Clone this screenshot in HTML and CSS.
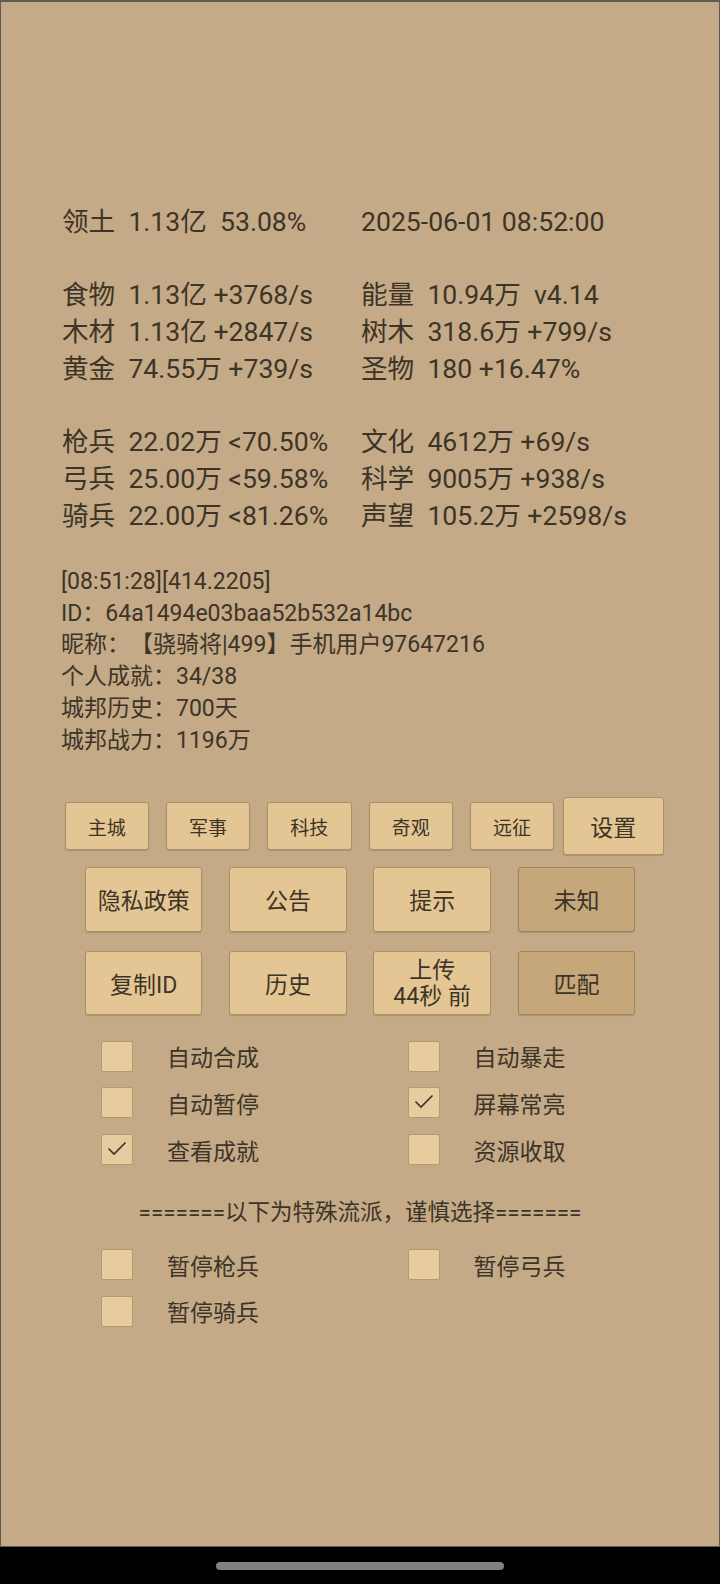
FILE: index.html
```html
<!DOCTYPE html>
<html lang="zh-CN">

<head>
  <meta charset="UTF-8">
  <meta name="viewport" content="width=device-width, initial-scale=1.0">
  <title>城邦</title>
  <link rel="stylesheet" href="styles.css">
</head>

<body>
  <div class="app">
    <div class="stats">
      <div class="col">领土  1.13亿  53.08%

食物  1.13亿 +3768/s
木材  1.13亿 +2847/s
黄金  74.55万 +739/s

枪兵  22.02万 <70.50%
弓兵  25.00万 <59.58%
骑兵  22.00万 <81.26%</div>
      <div class="col">2025-06-01 08:52:00

能量  10.94万  v4.14
树木  318.6万 +799/s
圣物  180 +16.47%

文化  4612万 +69/s
科学  9005万 +938/s
声望  105.2万 +2598/s</div>
    </div>

    <div class="log">[08:51:28][414.2205]
ID：64a1494e03baa52b532a14bc
昵称：【骁骑将|499】手机用户97647216
个人成就：34/38
城邦历史：700天
城邦战力：1196万</div>

    <div class="tabs">
      <button class="tab">主城</button>
      <button class="tab">军事</button>
      <button class="tab">科技</button>
      <button class="tab">奇观</button>
      <button class="tab">远征</button>
      <button class="tab big">设置</button>
    </div>

    <div class="actions">
      <button class="btn">隐私政策</button>
      <button class="btn">公告</button>
      <button class="btn">提示</button>
      <button class="btn dark">未知</button>
      <button class="btn">复制ID</button>
      <button class="btn">历史</button>
      <button class="btn two">上传<br>44秒 前</button>
      <button class="btn dark">匹配</button>
    </div>

    <div class="checks">
      <label class="check"><span class="box"></span>自动合成</label>
      <label class="check"><span class="box"></span>自动暴走</label>
      <label class="check"><span class="box"></span>自动暂停</label>
      <label class="check"><span class="box"><svg viewBox="0 0 30 29"><path d="M6.5 13.5 L12 19 L23.5 7.5" /></svg></span>屏幕常亮</label>
      <label class="check"><span class="box"><svg viewBox="0 0 30 29"><path d="M6.5 13.5 L12 19 L23.5 7.5" /></svg></span>查看成就</label>
      <label class="check"><span class="box"></span>资源收取</label>
    </div>

    <div class="notice">=======以下为特殊流派，谨慎选择=======</div>

    <div class="checks">
      <label class="check"><span class="box"></span>暂停枪兵</label>
      <label class="check"><span class="box"></span>暂停弓兵</label>
      <label class="check"><span class="box"></span>暂停骑兵</label>
    </div>
  </div>
  <div class="navbar"><span class="pill"></span></div>
</body>

</html>
```

FILE: styles.css
```css
* {
  margin: 0;
  padding: 0;
  box-sizing: border-box;
}

body {
  width: 720px;
  height: 1584px;
  background: #000;
  font-family: Roboto, "Noto Sans CJK SC", sans-serif;
  color: #3d3428;
  text-spacing-trim: space-all;
  overflow: hidden;
}

.app {
  height: 1547px;
  background-color: #c4aa86;
  border: 1px solid #5e5a55;
  border-top-width: 2px;
}

.stats {
  display: grid;
  grid-template-columns: 299px auto;
  margin-top: 202px;
  padding-left: 61px;
  font-size: 26.6px;
  line-height: 36.7px;
}

.col {
  white-space: pre;
}

.log {
  white-space: pre;
  margin-top: 31.7px;
  padding-left: 60px;
  font-size: 23px;
  line-height: 31.7px;
}

button {
  font-family: Roboto, "Noto Sans CJK SC", sans-serif;
  color: #3d3428;
  background-color: #e4c694;
  border: 1px solid #ab8f68;
  border-radius: 3px;
  box-shadow: 0 1px 1px rgba(80, 60, 30, 0.2);
}

.tabs {
  display: grid;
  grid-template-columns: repeat(6, 1fr);
  align-items: center;
  width: 608px;
  height: 58px;
  margin: 41px auto 0;
}

.tab {
  height: 48px;
  margin: 0 8.5px;
  font-size: 19px;
}

.tab.big {
  height: 58px;
  margin: 0;
  font-size: 23px;
}

.actions {
  display: grid;
  grid-template-columns: repeat(4, 1fr);
  row-gap: 19px;
  justify-items: center;
  width: 577px;
  margin: 12px auto 0;
}

.btn {
  width: 117.5px;
  height: 64.4px;
  font-size: 23px;
}

.btn.two {
  line-height: 26px;
  padding-top: 2px;
}

.btn.dark {
  background-color: #c6a779;
  border-color: #9e845c;
}

.checks {
  display: grid;
  grid-template-columns: 306.6px 306.6px;
  padding-left: 100px;
  margin-top: 18px;
}

.check {
  display: flex;
  align-items: center;
  height: 46.6px;
  font-size: 23px;
}

.box {
  display: block;
  width: 32px;
  height: 31px;
  margin-right: 34px;
  background-color: #e6cc9f;
  border: 1px solid #b8996d;
  border-radius: 2px;
}

.box svg {
  display: block;
  width: 30px;
  height: 29px;
  fill: none;
  stroke: #3d3428;
  stroke-width: 1.6;
}

.notice {
  margin-top: 16px;
  margin-bottom: -12px;
  text-align: center;
  font-size: 22.5px;
  line-height: 46.6px;
}

.navbar {
  display: flex;
  justify-content: center;
  padding-top: 15px;
  height: 37px;
}

.pill {
  width: 288px;
  height: 8px;
  border-radius: 4px;
  background-color: #808080;
}
```
